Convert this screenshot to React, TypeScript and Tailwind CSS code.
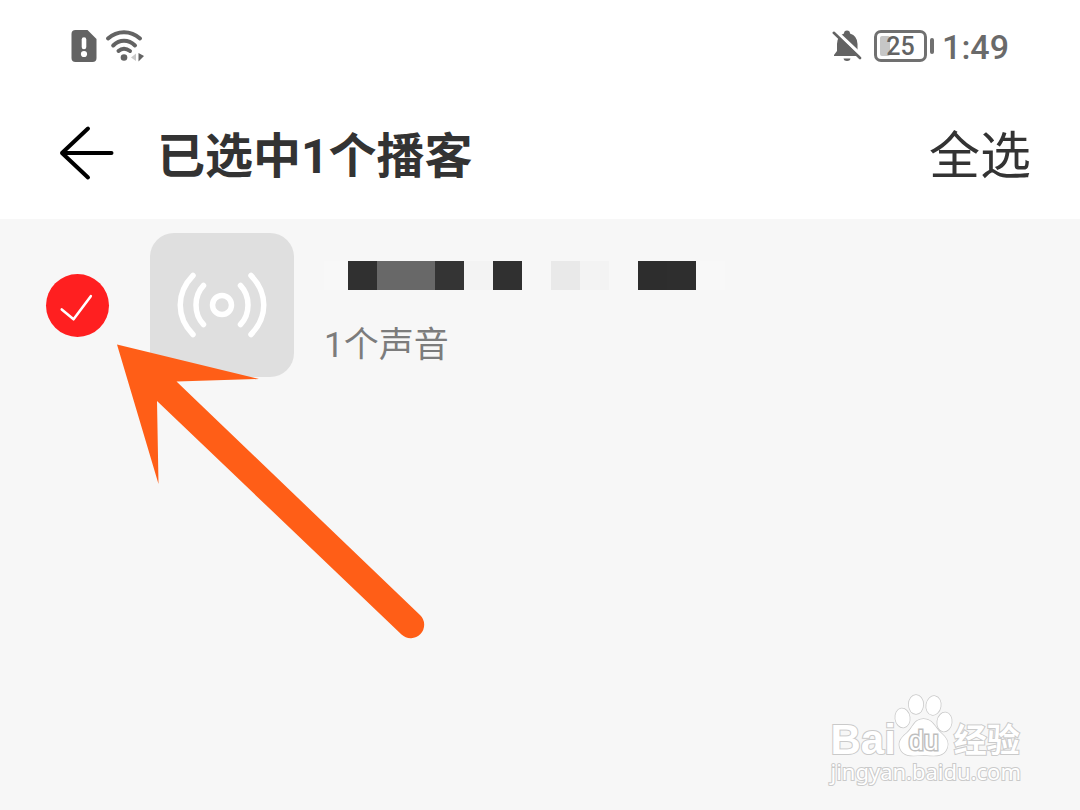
import React, { useState } from "react";

const MASK_CELLS = [
  "bg-[#f8f8f8]",
  "bg-[#303030]",
  "bg-[#686868]",
  "bg-[#686868]",
  "bg-[#343434]",
  "bg-[#f3f3f3]",
  "bg-[#303030]",
  "bg-[#f7f7f7]",
  "bg-[#e9e9e9]",
  "bg-[#f3f3f3]",
  "bg-[#f7f7f7]",
  "bg-[#2d2d2d]",
  "bg-[#2e2e2e]",
  "bg-[#f8f8f8]",
];

function SimAlertIcon() {
  return (
    <svg viewBox="0 0 26 32" className="h-8 w-[26px]" aria-hidden="true">
      <path d="M4.5 0H16.5L25.5 9V28Q25.5 32 21.5 32H4.5Q.5 32 .5 28V4Q.5 0 4.5 0Z" fill="#636363" />
      <path d="M13 9.5V17" stroke="#fff" strokeWidth="4.600" strokeLinecap="round" />
      <circle cx="13" cy="24" r="3.100" fill="#fff" />
    </svg>
  );
}

function WifiIcon() {
  return (
    <svg viewBox="0 0 40 32" className="h-8 w-10" aria-hidden="true">
      <g fill="none" stroke="#636363" strokeWidth="4" strokeLinecap="round">
        <path d="M3 8.5Q10 2.200 19 2.200T35 8.5" />
        <path d="M8.200 15.500Q13 10.800 19 10.800T30 15.500" />
        <path d="M13.500 21Q16 18.800 19 18.800T25 21" />
      </g>
      <circle cx="19" cy="27.500" r="3.300" fill="#636363" />
      <path d="M31 23.500V31L26 27.500Z" fill="#c9c9c9" />
      <path d="M33.500 23V31.500L39 26Z" fill="#636363" />
    </svg>
  );
}

function BellOffIcon() {
  return (
    <svg viewBox="0 0 30 32" className="h-8 w-[30px]" aria-hidden="true">
      <path
        d="M12 3.500Q12 .5 15 .5T18 3.500Q25.500 6 25.500 14V21L28 25V26H2V25L5 21V14Q5 6 12 3.500Z"
        fill="#636363"
      />
      <path d="M11.500 28.500H18.500Q18 31 15 31T11.500 28.500Z" fill="#636363" />
      <path d="M3 .5L30 26" stroke="#fff" strokeWidth="3.500" />
      <path d="M1.800 2.800L28 28" stroke="#636363" strokeWidth="2.600" strokeLinecap="round" />
    </svg>
  );
}

function Battery({ level }: { level: number }) {
  return (
    <div className="flex items-center gap-[3px]" aria-label={`${level}%`}>
      <div className="relative flex h-8 w-[53px] items-center justify-center rounded-[7px] border-[3px] border-[#707070]">
        <div className="absolute inset-[3px]">
          <div className="h-full rounded-[2px] bg-[#c6c6c6]" style={{ width: `${level}%` }} />
        </div>
        <span className="relative text-[25px] leading-none font-medium">{level}</span>
      </div>
      <div className="h-4 w-1 rounded-full bg-[#707070]" />
    </div>
  );
}

function PodcastIcon() {
  return (
    <svg viewBox="0 0 92 66" className="h-[66px] w-[92px]" aria-hidden="true">
      <g fill="none" stroke="#fff" strokeWidth="5.500" strokeLinecap="round">
        <circle cx="46" cy="33" r="9.500" />
        <path d="M27.500 13.500C17.500 24 17.500 42 27.500 52.500" />
        <path d="M64.500 13.500C74.500 24 74.500 42 64.500 52.500" />
        <path d="M17 3.500C0 21 0 45 17 62.500" />
        <path d="M75 3.500C92 21 92 45 75 62.500" />
      </g>
    </svg>
  );
}

function Watermark() {
  return (
    <div className="absolute right-[59px] bottom-[27px] flex flex-col text-white [-webkit-text-stroke:2px_#cacaca] [paint-order:stroke]">
      <div className="flex items-end">
        <span className="font-['Liberation_Sans',sans-serif] text-[42px] leading-[38px] font-bold">Bai</span>
        <div className="relative -ml-0.5 pb-0.5">
          <svg viewBox="0 0 60 64" className="block h-16 w-[60px]" aria-hidden="true">
            <g fill="#fff" stroke="#c9c9c9" strokeWidth="1.500">
              <ellipse cx="22" cy="11.500" rx="7.200" ry="9.500" />
              <ellipse cx="39.500" cy="12.500" rx="7.200" ry="9.500" transform="rotate(10 39.500 12.500)" />
              <ellipse cx="8.500" cy="25" rx="7.200" ry="9.500" transform="rotate(-8 8.500 25)" />
              <ellipse cx="50.500" cy="29" rx="7.200" ry="9.500" transform="rotate(8 50.500 29)" />
              <path d="M29.500 26C39 26 41 35 47 40C53 45 55 50 53 55C50 64 41 63 30 62C18 63 9 64 6 55C4 49 7 45 13 40C19 35 20 26 29.500 26Z" />
            </g>
          </svg>
          <span className="absolute inset-x-0 bottom-1 text-center font-['Liberation_Sans',sans-serif] text-[27px] leading-7 [-webkit-text-stroke:3px_#bebebe]">
            du
          </span>
        </div>
        <span className="text-[33px] leading-9 font-bold">经验</span>
      </div>
      <span className="font-['Noto_Sans',sans-serif] text-[22px] leading-6">jingyan.baidu.com</span>
    </div>
  );
}

export default function App() {
  const [checked, setChecked] = useState(true);

  return (
    <div className="flex min-h-screen flex-col bg-[#f7f7f7] font-[Roboto,'Noto_Sans_CJK_SC',sans-serif] text-[#333]">
      <div className="flex h-[92px] items-center justify-between bg-white px-[71px] text-[#636363]">
        <div className="flex items-center gap-2">
          <SimAlertIcon />
          <WifiIcon />
        </div>
        <div className="flex items-center gap-3">
          <BellOffIcon />
          <Battery level={25} />
          <time className="-ml-1 pt-0.5 text-[34px] leading-10 font-medium text-[#6a6a6a]">1:49</time>
        </div>
      </div>

      <header className="flex h-[127px] items-center bg-white pr-[49px] pb-1.5 pl-[58px]">
        <button type="button" aria-label="返回" className="mr-[41px]">
          <svg viewBox="0 0 58 56" className="block h-14 w-[58px]" aria-hidden="true">
            <path
              d="M30 3.500L4 28L30 52.500M4 28H53.500"
              fill="none"
              stroke="#000"
              strokeWidth="4"
              strokeLinecap="round"
              strokeLinejoin="round"
            />
          </svg>
        </button>
        <h1 className="flex-1 pt-2 text-[48px] leading-[56px] font-bold">已选中1个播客</h1>
        <button type="button" className="pt-2 text-[51px] leading-[56px]">
          全选
        </button>
      </header>

      <main className="relative flex-1">
        <ul>
          <li>
            <label className="flex items-center py-[14px] pl-[46px]">
              <span className="relative mr-[41px] size-[63px]">
                <input
                  type="checkbox"
                  aria-label="1个声音"
                  checked={checked}
                  onChange={(e) => setChecked(e.target.checked)}
                  className="block size-full appearance-none rounded-full border-2 border-[#ccc] checked:border-0 checked:bg-[#ff1f20]"
                />
                {checked && (
                  <svg viewBox="0 0 64 64" className="pointer-events-none absolute inset-0 size-full" aria-hidden="true">
                    <path
                      d="M16 36L28 46L45.500 22.500"
                      fill="none"
                      stroke="#fff"
                      strokeWidth="2.600"
                      strokeLinecap="round"
                      strokeLinejoin="round"
                    />
                  </svg>
                )}
              </span>
              <span className="mr-[30px] flex size-36 items-center justify-center rounded-3xl bg-[#dfdfdf]">
                <PodcastIcon />
              </span>
              <span className="flex flex-col gap-[35px] pt-[18px]">
                <span className="flex">
                  {MASK_CELLS.map((tone, i) => (
                    <span key={i} className={`h-[29px] ${i === 0 ? "w-6" : "w-[29px]"} ${tone}`} />
                  ))}
                </span>
                <span className="text-[35px] leading-[42px] text-[#7c7c7c]">1个声音</span>
              </span>
            </label>
          </li>
        </ul>

        <svg
          viewBox="0 0 308 296"
          className="pointer-events-none absolute top-[125px] left-[117px] h-[296px] w-[308px]"
          aria-hidden="true"
        >
          <path
            d="M0 .5L142 35L59.500 37.500L303 271A13.300 13.300 0 0 1 284.500 290.500L40 57L41.500 140Z"
            fill="#ff5e17"
          />
        </svg>

        <Watermark />
      </main>
    </div>
  );
}
